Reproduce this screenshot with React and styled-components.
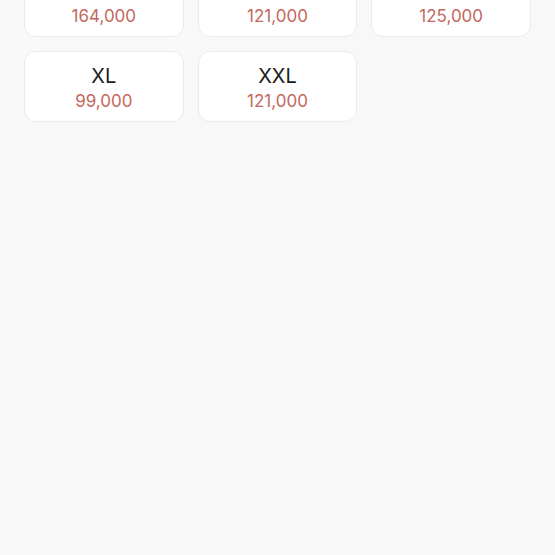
import React from "react";
import styled, { createGlobalStyle } from "styled-components";

const GlobalStyle = createGlobalStyle`
  html, body {
    margin: 0;
    padding: 0;
    background: #f8f8f8;
    font-family: Inter, "Liberation Sans", Arial, sans-serif;
  }
`;

const Page = styled.div`
  width: 555px;
  height: 555px;
  overflow: hidden;
  background: #f8f8f8;
`;

const Grid = styled.div`
  display: grid;
  grid-template-columns: repeat(3, 1fr);
  column-gap: 14px;
  row-gap: 14px;
  padding: 0 24px;
  margin-top: -34px;
`;

const Card = styled.div`
  height: 71px;
  box-sizing: border-box;
  padding-top: 3px;
  background: #ffffff;
  border: 1px solid #ebebeb;
  border-radius: 12px;
  display: flex;
  flex-direction: column;
  align-items: center;
  justify-content: center;
  gap: 2px;
`;

const Size = styled.div`
  font-size: 20px;
  line-height: 24px;
  color: #1c1c1c;
`;

const Price = styled.div`
  font-size: 17px;
  line-height: 22px;
  color: #c4675c;
`;

const sizes = [
  ["S", "164,000"],
  ["M", "121,000"],
  ["L", "125,000"],
  ["XL", "99,000"],
  ["XXL", "121,000"],
];

export default function App() {
  return (
    <Page>
      <GlobalStyle />
      <Grid>
        {sizes.map(([size, price]) => (
          <Card key={size}>
            <Size>{size}</Size>
            <Price>{price}</Price>
          </Card>
        ))}
      </Grid>
    </Page>
  );
}
